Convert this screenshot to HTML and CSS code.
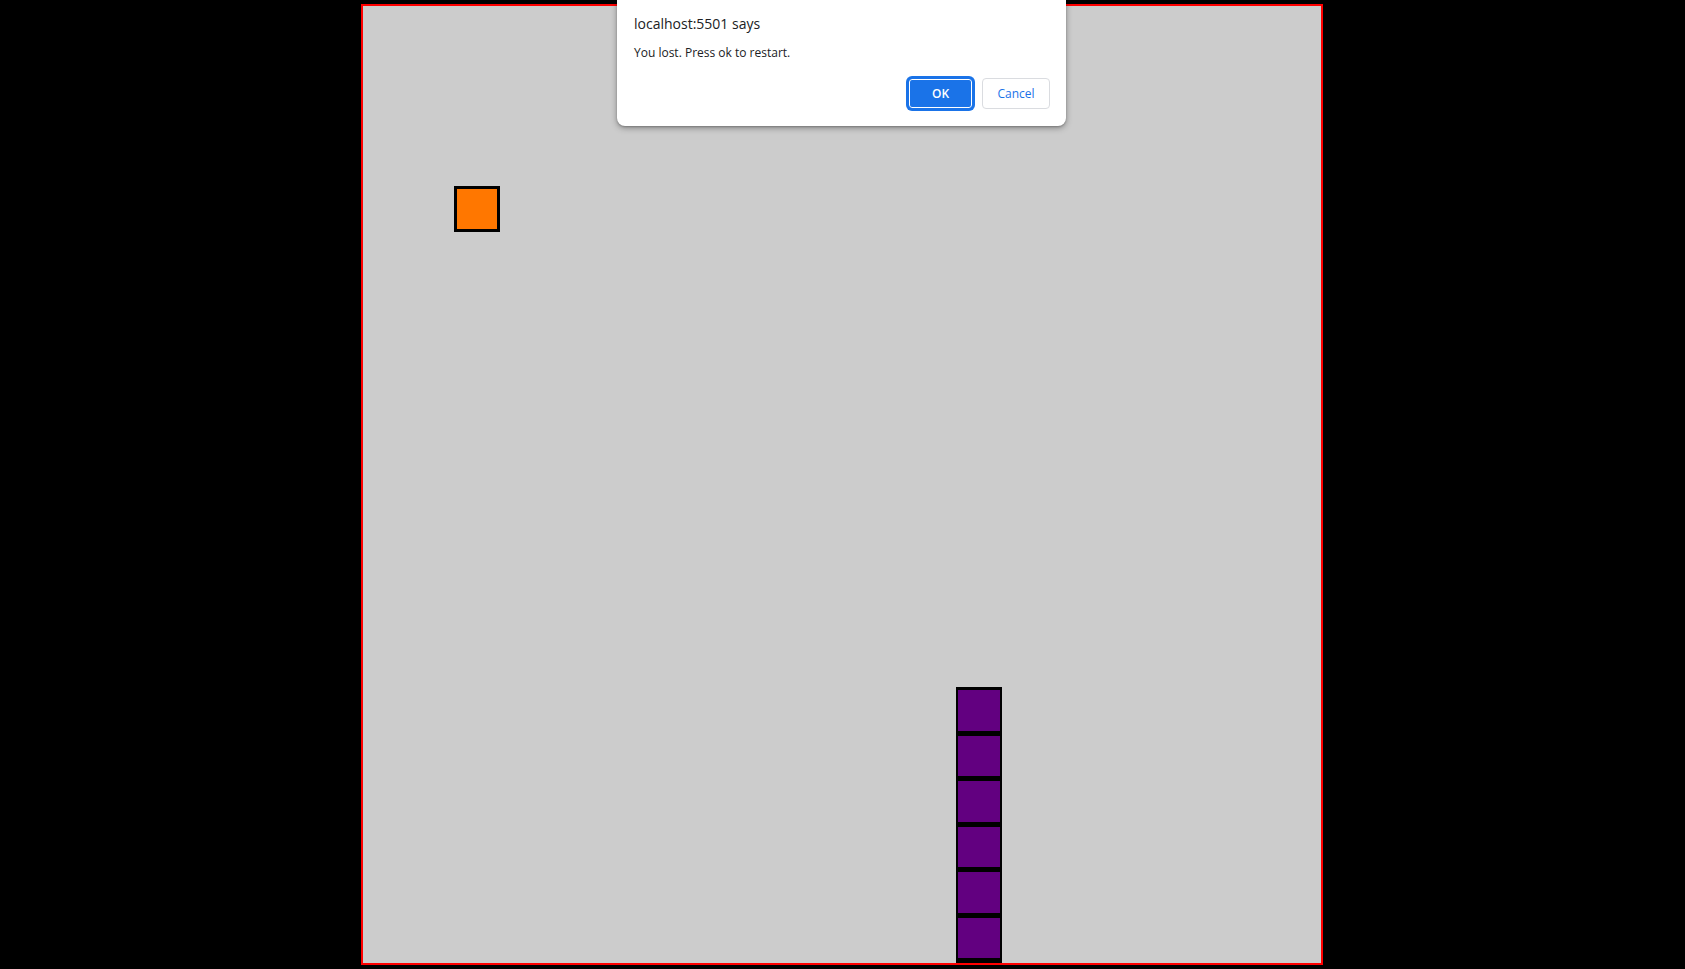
FILE: index.html
```html
<!DOCTYPE html>
<html>
<head>
<meta charset="utf-8">
<title>Snake</title>
<link rel="stylesheet" href="styles.css">
</head>
<body>
<div class="board">
  <div class="food"></div>
  <div class="snake">
    <div class="seg"></div>
    <div class="seg"></div>
    <div class="seg"></div>
    <div class="seg"></div>
    <div class="seg"></div>
    <div class="seg"></div>
    <div class="seg"></div>
  </div>
</div>
<div class="dialog">
  <div class="dialog-title">localhost:5501 says</div>
  <div class="dialog-msg">You lost. Press ok to restart.</div>
  <div class="dialog-actions">
    <button class="btn btn-ok">OK</button>
    <button class="btn btn-cancel">Cancel</button>
  </div>
</div>
</body>
</html>
```
FILE: styles.css
```css
html, body {
  margin: 0;
  padding: 0;
  background: #000;
  height: 100%;
  overflow: hidden;
}
.board {
  position: relative;
  width: 958px;
  height: 957px;
  margin: 4px auto 0;
  border: 2px solid #ff0000;
  background: #cccccc;
  overflow: hidden;
  box-sizing: content-box;
  left: -0.5px;
}
.food {
  position: absolute;
  left: 91px;
  top: 180px;
  width: 46px;
  height: 46px;
  box-sizing: border-box;
  border: 3px solid #000;
  background: #ff7700;
}
.snake {
  position: absolute;
  left: 593px;
  top: 681px;
  width: 46px;
  display: flex;
  flex-direction: column;
}
.seg {
  flex: none;
  width: 46px;
  height: 45.5px;
  box-sizing: border-box;
  border: 2px solid #000;
  border-top-width: 3px;
  border-bottom-width: 2px;
  background: #620080;
}
.dialog {
  position: absolute;
  top: 0;
  left: 617px;
  width: 449px;
  height: 126px;
  box-sizing: border-box;
  padding: 14px 16px 0 17px;
  background: #fff;
  border-radius: 0 0 8px 8px;
  box-shadow: 0 2px 6px rgba(0, 0, 0, 0.35), 0 1px 2px rgba(0, 0, 0, 0.2);
  font-family: "Open Sans", "Noto Sans", sans-serif;
  color: #202124;
}
.dialog-title {
  font-size: 14px;
  line-height: 20px;
}
.dialog-msg {
  margin-top: 11px;
  font-size: 12px;
  line-height: 16px;
}
.dialog-actions {
  display: flex;
  justify-content: flex-end;
  align-items: center;
  gap: 7px;
  margin-top: 17px;
}
.btn {
  font-family: "Open Sans", "Noto Sans", sans-serif;
  font-size: 12px;
  height: 31px;
  border-radius: 4px;
  box-sizing: border-box;
  cursor: pointer;
}
.btn-ok {
  width: 65px;
  background: #1a73e8;
  color: #fff;
  font-weight: 600;
  border: 1px solid #1a73e8;
  box-shadow: inset 0 0 0 1px #fff, 0 0 0 2px #1a73e8;
  margin-right: 2px;
}
.btn-cancel {
  width: 68px;
  background: #fff;
  color: #1a73e8;
  font-weight: 500;
  border: 1px solid #dadce0;
}
```
